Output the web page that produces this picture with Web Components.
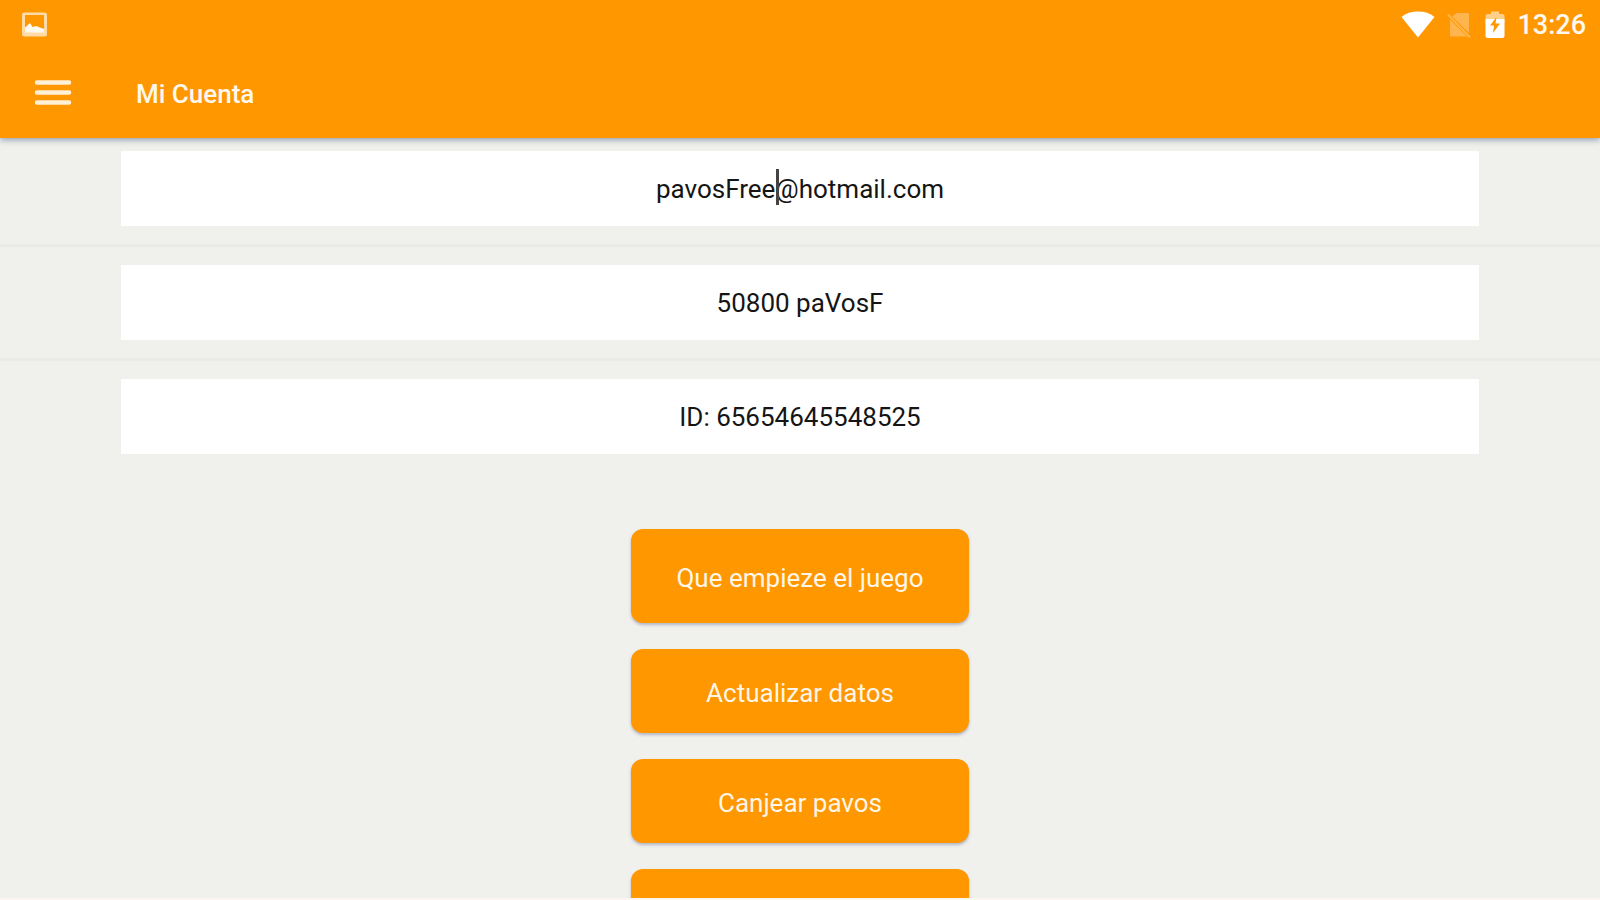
<!DOCTYPE html>
<html lang="es">
<head>
<meta charset="utf-8">
<meta name="viewport" content="width=device-width, initial-scale=1">
<title>Mi Cuenta</title>
<style>
  html, body { margin: 0; height: 100%; }
  body { font-family: Roboto, "Liberation Sans", sans-serif; background: #f0f0ec; overflow: hidden; }
</style>
</head>
<body>
<account-app></account-app>
<script>
const define = (name, html, setup) => {
  const template = document.createElement('template');
  template.innerHTML = html;
  customElements.define(name, class extends HTMLElement {
    constructor() {
      super();
      this.attachShadow({ mode: 'open' }).append(template.content.cloneNode(true));
    }
    connectedCallback() { if (setup) setup(this, this.shadowRoot); }
  });
};

define('status-bar', `
  <style>
    :host { display: flex; align-items: center; justify-content: space-between; height: 50px; padding: 0 14px 0 20px; color: #fff8ee; }
    .system { display: flex; align-items: center; gap: 12px; }
    svg { display: block; }
    time { font-size: 27px; line-height: 32px; font-weight: 500; }
  </style>
  <svg width="30" height="30" viewBox="0 0 30 30" role="img" aria-label="Imagen guardada">
    <path fill="#ffdca6" fill-rule="evenodd" d="M4.500 2.500h20a2.500 2.500 0 0 1 2.500 2.500v19a2.500 2.500 0 0 1-2.500 2.500h-20A2.500 2.500 0 0 1 2 24V5a2.500 2.500 0 0 1 2.500-2.500zM5 5v17h19V5z"/>
    <path fill="#fffaf0" d="M5 22.500v-5l5-4.500 2.500 4 3.500-1 8 3v3.500z"/>
  </svg>
  <div class="system">
    <svg width="34" height="32" viewBox="0 0 34 32" role="img" aria-label="Wi-Fi">
      <path fill="#fff" d="M0.500 8C9 0.700 25 0.700 33.500 8L17 28.500z"/>
    </svg>
    <svg width="26" height="32" viewBox="0 0 26 32" role="img" aria-label="Sin SIM">
      <path fill="#ffb54d" d="M9.500 4H22v20L5 7.500zM3 10.500l17 17H3z"/>
      <path d="M1 5.500l22 23" stroke="#ffb54d" stroke-width="2"/>
      <path d="M4 7l19 19" stroke="#ff9700" stroke-width="1"/>
    </svg>
    <svg width="20" height="32" viewBox="0 0 20 32" role="img" aria-label="Cargando">
      <path fill="#ffcf8c" d="M6 2.500h8V5h4l1.500 1.500V14H.5V6.500L2 5h4z"/>
      <path fill="#fff" d="M0.500 10h19v17a2 2 0 0 1-2 2h-15a2 2 0 0 1-2-2z"/>
      <path fill="#ff9700" d="M11.500 8L5 16.500h4L8 24l7-9.500h-4.500z"/>
    </svg>
    <time>13:26</time>
  </div>`);

define('app-bar', `
  <style>
    :host { display: flex; align-items: center; height: 88px; padding: 0 33px; color: #fff8ee; }
    button { display: block; width: 40px; height: 40px; margin: 0 63px 4px 0; padding: 0; border: 0; background: none; color: inherit; }
    svg { display: block; }
    h1 { margin: 0; font-size: 26px; line-height: 32px; font-weight: 500; }
  </style>
  <button type="button" aria-label="Menú">
    <svg width="40" height="40" viewBox="0 0 40 40" stroke="#fff0d6" stroke-width="4.500" stroke-linecap="round" fill="none">
      <path d="M4 10.500h32M4 20.500h32M4 30.500h32"/>
    </svg>
  </button>
  <h1><slot></slot></h1>`);

define('account-field', `
  <style>
    :host { display: block; position: relative; height: 75px; }
    input { display: block; box-sizing: border-box; width: 100%; height: 100%; margin: 0; padding: 0; border: 0; border-radius: 0; outline: 0;
      background: #fff; color: #151515; font: 400 26px/32px Roboto, "Liberation Sans", sans-serif; text-align: center; }
    .caret { display: none; position: absolute; left: calc(50% - 24px); top: 18px; width: 3px; height: 36px; background: #444; }
    :host([editing]) .caret { display: block; }
  </style>
  <input type="text">
  <span class="caret"></span>`,
  (host, root) => {
    const input = root.querySelector('input');
    input.value = host.getAttribute('value');
    input.setAttribute('aria-label', host.getAttribute('label'));
  });

define('action-button', `
  <style>
    :host { display: block; width: 338px; }
    button { display: block; width: 100%; height: var(--button-height, 84px); margin: 0; padding: 3px 0 0; border: 0; border-radius: 12px;
      background: #ff9700; color: #fff6e8; box-shadow: 0 2px 3px rgba(70, 80, 130, .35);
      font: 400 26px/32px Roboto, "Liberation Sans", sans-serif; }
  </style>
  <button type="button"><slot></slot></button>`,
  (host, root) => {
    if (host.hasAttribute('label')) root.querySelector('button').setAttribute('aria-label', host.getAttribute('label'));
  });

define('account-app', `
  <style>
    :host { display: flex; flex-direction: column; box-sizing: border-box; height: 100vh; overflow: hidden; border-bottom: 2px solid #fbf6f0; background: #f0f0ec; }
    header { flex: none; position: relative; background: #ff9700; box-shadow: 0 2px 6px rgba(50, 80, 120, .5); }
    main { flex: 1; min-height: 0; overflow: hidden; }
    .row { padding: 18px 121px; border-bottom: 3px solid #eaeae7; }
    .row:first-child { padding-top: 13px; }
    .row:last-child { border-bottom: 0; }
    .actions { display: flex; flex-direction: column; align-items: center; gap: 26px; padding-top: 57px; }
    .primary { --button-height: 94px; }
  </style>
  <header>
    <status-bar></status-bar>
    <app-bar>Mi Cuenta</app-bar>
  </header>
  <main>
    <section>
      <div class="row"><account-field label="Correo" value="pavosFree@hotmail.com" editing></account-field></div>
      <div class="row"><account-field label="Saldo" value="50800 paVosF"></account-field></div>
      <div class="row"><account-field label="Identificador" value="ID: 65654645548525"></account-field></div>
    </section>
    <div class="actions">
      <action-button class="primary">Que empieze el juego</action-button>
      <action-button>Actualizar datos</action-button>
      <action-button>Canjear pavos</action-button>
      <action-button label="Más opciones"></action-button>
    </div>
  </main>`);
</script>
</body>
</html>
